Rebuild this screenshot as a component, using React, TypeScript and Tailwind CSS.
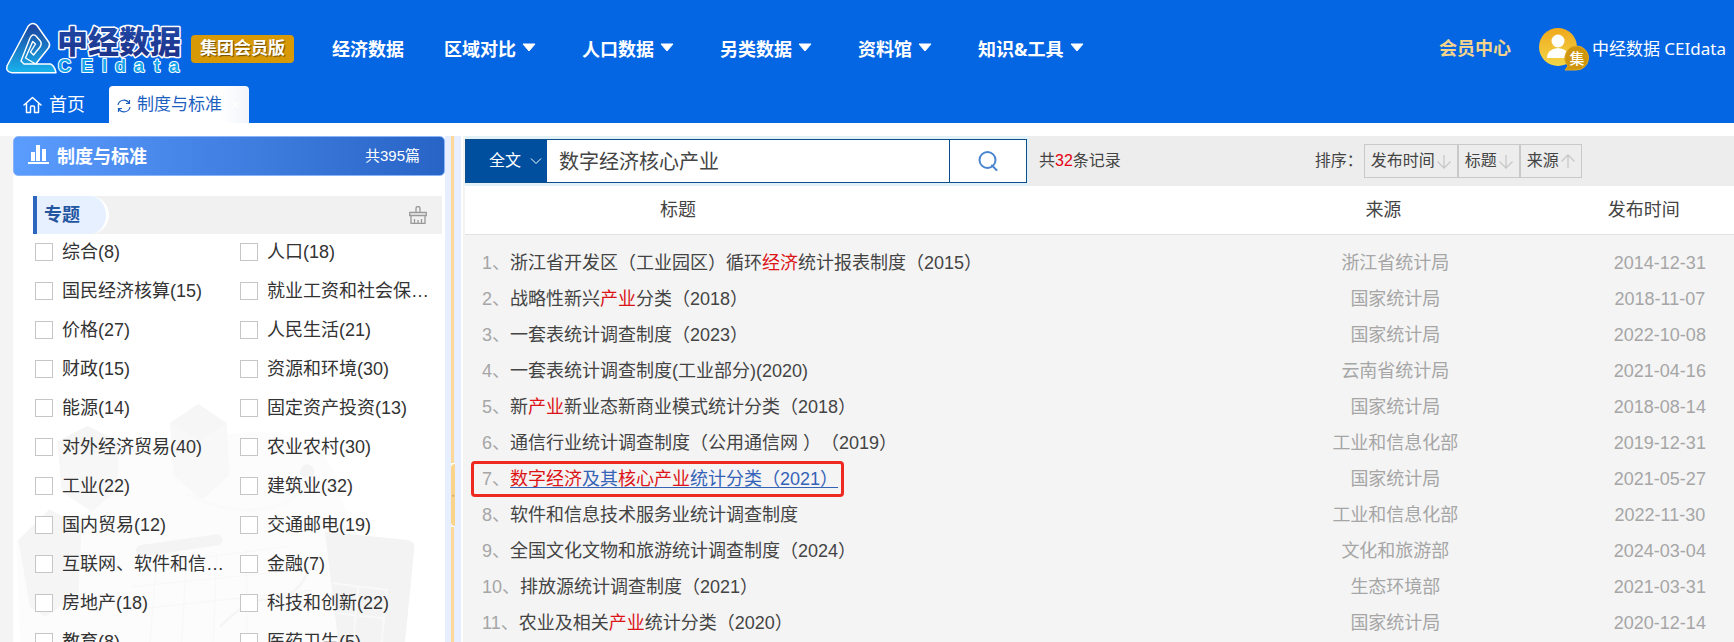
import React from "react";

type Run = string | { hit: string };
type Row = { title: Run[]; source: string; date: string; active?: boolean };

const NAV: { label: string; menu: boolean }[] = [
  { label: "经济数据", menu: false },
  { label: "区域对比", menu: true },
  { label: "人口数据", menu: true },
  { label: "另类数据", menu: true },
  { label: "资料馆", menu: true },
  { label: "知识&工具", menu: true },
];

const TOPICS: string[] = [
  "综合(8)", "人口(18)",
  "国民经济核算(15)", "就业工资和社会保障(12)",
  "价格(27)", "人民生活(21)",
  "财政(15)", "资源和环境(30)",
  "能源(14)", "固定资产投资(13)",
  "对外经济贸易(40)", "农业农村(30)",
  "工业(22)", "建筑业(32)",
  "国内贸易(12)", "交通邮电(19)",
  "互联网、软件和信息技术(9)", "金融(7)",
  "房地产(18)", "科技和创新(22)",
  "教育(8)", "医药卫生(5)",
];

const ROWS: Row[] = [
  { title: ["浙江省开发区（工业园区）循环", { hit: "经济" }, "统计报表制度（2015）"], source: "浙江省统计局", date: "2014-12-31" },
  { title: ["战略性新兴", { hit: "产业" }, "分类（2018）"], source: "国家统计局", date: "2018-11-07" },
  { title: ["一套表统计调查制度（2023）"], source: "国家统计局", date: "2022-10-08" },
  { title: ["一套表统计调查制度(工业部分)(2020)"], source: "云南省统计局", date: "2021-04-16" },
  { title: ["新", { hit: "产业" }, "新业态新商业模式统计分类（2018）"], source: "国家统计局", date: "2018-08-14" },
  { title: ["通信行业统计调查制度（公用通信网 ）（2019）"], source: "工业和信息化部", date: "2019-12-31" },
  { title: [{ hit: "数字经济" }, "及其", { hit: "核心产业" }, "统计分类（2021）"], source: "国家统计局", date: "2021-05-27", active: true },
  { title: ["软件和信息技术服务业统计调查制度"], source: "工业和信息化部", date: "2022-11-30" },
  { title: ["全国文化文物和旅游统计调查制度（2024）"], source: "文化和旅游部", date: "2024-03-04" },
  { title: ["排放源统计调查制度（2021）"], source: "生态环境部", date: "2021-03-31" },
  { title: ["农业及相关", { hit: "产业" }, "统计分类（2020）"], source: "国家统计局", date: "2020-12-14" },
];

function Logo() {
  return (
    <svg width="178" height="56" viewBox="0 0 178 56" role="img" aria-label="中经数据 CEIdata" className="shrink-0">
      <defs>
        <linearGradient id="mark" gradientUnits="userSpaceOnUse" x1="0" y1="2" x2="0" y2="52">
          <stop offset="0" stopColor="#1b3f9c" />
          <stop offset="1" stopColor="#18b4ee" />
        </linearGradient>
        <linearGradient id="word" x1="0" y1="0" x2="0" y2="1">
          <stop offset="0" stopColor="#1f4fae" />
          <stop offset="1" stopColor="#1e2f86" />
        </linearGradient>
      </defs>
      <path
        d="M24.300 5Q28.700 .2 33 4.500L45 21.500Q46.500 24.500 44.300 27.300L31.700 43H46.500Q50.500 44.500 52 51.700H8Q1.500 51 3 45Z"
        fill="url(#mark)" stroke="#fff" strokeWidth="1.500" strokeLinejoin="round"
      />
      <path
        d="M31.700 43H20L17 40L26 17Q28.500 12 32 15L36.700 20.500Q38 23 36 26L29.500 34L26.500 31L31.500 23L28.700 20.500L21.500 37Z"
        fill="url(#mark)" stroke="#fff" strokeWidth="1.400" strokeLinejoin="round"
      />
      <g strokeLinejoin="round" stroke="#fff" paintOrder="stroke">
        <text x="53" y="32" fontSize="31" fontWeight="900" strokeWidth="3" fill="url(#word)" className="font-['Noto_Sans_CJK_SC',sans-serif]">中经数据</text>
        <text x="54 77 98 111 130 150 165" y="51" fontSize="18" fontWeight="700" strokeWidth="2" fill="#16a6ea" className="font-['Liberation_Sans',sans-serif]">CEIdata</text>
      </g>
    </svg>
  );
}

function Avatar() {
  return (
    <svg width="52" height="46" viewBox="0 0 52 46" aria-hidden="true" className="shrink-0">
      <defs>
        <linearGradient id="gold" x1="0" y1="0" x2="0" y2="1">
          <stop offset="0" stopColor="#f0a81c" />
          <stop offset="1" stopColor="#f2d648" />
        </linearGradient>
      </defs>
      <circle cx="19" cy="21" r="19" fill="url(#gold)" />
      <circle cx="19" cy="15" r="6.500" fill="#fff" />
      <path d="M8 32q0-9 11-10q11 1 11 10Z" fill="#fff" />
      <path d="M38 20a12 12 0 1 1-1 24h-11l3-4A12 12 0 0 1 38 20Z" fill="#cf950c" stroke="#e0aa20" />
      <text x="38" y="37.500" textAnchor="middle" fontSize="15" fontWeight="500" fill="#fff" className="font-['Noto_Sans_CJK_SC',sans-serif]">集</text>
    </svg>
  );
}

function Header() {
  return (
    <header className="shrink-0 bg-[#0566e4] text-white">
      <div className="flex h-[86px] items-center pt-3 pr-2 pl-1">
        <a href="#home" className="flex"><Logo /></a>
        <span className="ml-[9px] flex h-7 w-[103px] shrink-0 items-center justify-center rounded-sm bg-[#d79a06] text-[17px] font-bold [text-shadow:1px_1px_1px_#6b4a00]">集团会员版</span>
        <nav className="ml-[38px] flex items-center gap-[46px] text-lg font-bold whitespace-nowrap">
          {NAV.map((n) => (
            <a key={n.label} href="#nav" className="flex items-center gap-[6px] font-['Noto_Sans','Noto_Sans_CJK_SC',sans-serif] first:-mr-[6px]">
              {n.label}
              {n.menu && (
                <svg width="14" height="9" viewBox="0 0 14 9" aria-hidden="true" className="mb-1">
                  <path d="M1 1h12L7 8Z" fill="#fff" stroke="#fff" strokeLinejoin="round" />
                </svg>
              )}
            </a>
          ))}
        </nav>
        <a href="#member" className="ml-auto text-lg font-bold whitespace-nowrap text-[#f3d48c]">会员中心</a>
        <a href="#account" className="ml-7 flex items-center gap-px font-['Noto_Sans','Noto_Sans_CJK_SC',sans-serif] text-[17px] whitespace-nowrap">
          <Avatar />
          中经数据 CEIdata
        </a>
      </div>
      <div className="flex h-[37px] items-stretch text-lg">
        <a href="#home" className="flex w-[109px] items-center gap-[7px] pl-[23px]">
          <svg width="19" height="18" viewBox="0 0 19 18" fill="none" stroke="#fff" strokeWidth="1.500" strokeLinejoin="round" strokeLinecap="round" aria-hidden="true">
            <path d="M1 9L9.500 1.500L18 9M3.500 7.500V16.500H7.500V11q0-1 1-1h2q1 0 1 1v5.500h4V7.500" />
          </svg>
          首页
        </a>
        <div className="flex w-[140px] items-center rounded-t-[4px] bg-linear-to-r from-white from-80% to-[#f1f4fa] pt-[2px] pl-2 text-[17px] text-[#1d5fbf]">
          <svg width="14" height="14" viewBox="0 0 14 14" fill="none" stroke="#1d5fbf" strokeWidth="1.200" aria-hidden="true">
            <path d="M1 6A6 6 0 0 1 12 4M13 8A6 6 0 0 1 2 10M12.500 1v3.500H9M1.500 13V9.500H5" />
          </svg>
          <a href="#standards" className="ml-[6px]">制度与标准</a>
          <button aria-label="关闭" className="ml-2 text-white">×</button>
        </div>
      </div>
    </header>
  );
}

function Backdrop() {
  return (
    <svg viewBox="39 0 1296 786" aria-hidden="true" className="absolute top-[244px] left-0 w-full">
      <path d="M360 210L700 160Q1000 130 1020 350L1215 786H60L50 480L260 400Z" fill="#fcfcfc" />
      <path d="M262 138L357 185L352 330L275 395L185 335L172 185Z" fill="#f7f7f7" />
      <path d="M262 138L357 185L268 230L172 185Z" fill="#f5f5f5" />
      <path d="M595 72L680 130L688 285L605 360L520 285L510 130Z" fill="#f8f8f8" />
      <path d="M595 72L680 130L600 180L510 130Z" fill="#f6f6f6" />
      <path d="M148 388L245 440L235 640L135 710L90 680L55 480Z" fill="#f5f5f5" />
      <path d="M425 512L650 480" stroke="#f4f4f4" strokeWidth="34" strokeLinecap="round" />
      <circle cx="922" cy="274" r="21" fill="#f4f4f4" />
      <path d="M922 290Q900 380 760 390Q640 390 560 340" stroke="#fafafa" strokeWidth="10" fill="none" />
      <path d="M975 455L1225 480Q1245 485 1243 505L1215 786H1015Z" fill="#f3f3f3" />
      <path d="M1000 610L1160 630L1145 786M1075 620L1060 786M1010 700L1150 715" stroke="#f9f9f9" strokeWidth="6" fill="none" />
      <path d="M400 560L860 500M395 620L900 570M390 690L940 630M470 540L450 786M560 530L545 786M650 520L640 786M740 510L740 786" stroke="#f8f8f8" strokeWidth="4" fill="none" />
      <path d="M660 740Q760 640 830 660Q900 640 925 570" stroke="#f5f5f5" strokeWidth="8" fill="none" />
    </svg>
  );
}

function Sidebar() {
  return (
    <aside className="relative w-[432px] shrink-0 overflow-hidden bg-white">
      <Backdrop />
      <div className="relative">
        <div className="flex h-10 items-center rounded-[5px] border border-[#8ab4f8] bg-linear-to-r from-[#5b9cff] to-[#2864c6] pr-6 pl-[14px] text-white">
          <svg width="21" height="20" viewBox="0 0 21 20" fill="#fff" aria-hidden="true" className="mb-1">
            <path d="M0 18h21v2H0ZM3 8h4v9H3ZM8 1h4v16H8ZM14 5h4v12h-4Z" />
          </svg>
          <h2 className="ml-2 pt-[2px] text-lg font-bold">制度与标准</h2>
          <span className="ml-auto text-[15px]">共395篇</span>
        </div>
        <div className="mt-5 mr-[3px] ml-5 flex h-[38px] items-center border-l-4 border-[#2c66bd] bg-[#f1f1f1]">
          <h3 className="flex h-full w-[72px] items-center rounded-r-full border-r-3 border-white bg-[#e6f0ff] pl-[7px] text-lg font-bold text-[#24569f]">专题</h3>
          <button aria-label="清空" className="mr-[15px] ml-auto">
            <svg width="18" height="18" viewBox="0 0 18 18" fill="none" stroke="#999" strokeWidth="1.300" aria-hidden="true" className="block">
              <path d="M7 6.500V2.500a2 2 0 0 1 4 0V6.500M.700 6.500H17.300V9.500H.700ZM2 9.500V17.300H16V9.500M5.500 13v4M9 14v3M12.500 13v4" />
            </svg>
          </button>
        </div>
        <div className="-mt-[2px] ml-[22px] grid grid-cols-2">
          {TOPICS.map((t) => (
            <label key={t} className="flex h-[39px] items-center gap-[9px] text-lg text-[#333]">
              <input type="checkbox" className="size-[18px] shrink-0 appearance-none border border-[#c6c6c6] bg-white" />
              <span className="w-[162px] truncate">{t}</span>
            </label>
          ))}
        </div>
      </div>
    </aside>
  );
}

function Splitter() {
  return (
    <div className="flex w-5 shrink-0">
      <div className="flex w-4 flex-col bg-[#e6eeff] pl-[6px]">
        <div className="h-[327px] w-[3px] bg-[#fdd896]" />
        <button aria-label="收起" className="flex h-16 w-1 items-center bg-white">
          <span className="block h-[62px] w-1 rounded-l-full bg-[#fbd48c] text-[6px] leading-[62px] text-[#8a7a55]">‹</span>
        </button>
        <div className="w-[3px] grow bg-[#fdd896]" />
      </div>
      <div className="w-[2px] bg-white" />
    </div>
  );
}

function SortArrow({ up }: { up?: boolean }) {
  return (
    <svg width="14" height="15" viewBox="0 0 14 15" fill="none" stroke="#c8c8c8" strokeWidth="1.300" aria-hidden="true">
      {up ? <path d="M7 14V1M.500 7.500L7 1L13.500 7.500" /> : <path d="M7 1V14M.500 7.500L7 14L13.500 7.500" />}
    </svg>
  );
}

function SearchBar() {
  const sorts = [
    { label: "发布时间", up: false },
    { label: "标题", up: false },
    { label: "来源", up: true },
  ];
  return (
    <div className="flex h-[50px] items-center bg-[#ededed] text-base text-[#444]">
      <div className="flex h-full w-[564px] shrink-0 items-center bg-[#e2f0f7]">
        <form className="flex h-11 w-[562px] border border-[#0b4f8c] bg-white">
          <div className="relative w-[81px] bg-[#004f9f]">
            <select aria-label="检索范围" className="h-full w-full appearance-none bg-[#004f9f] pl-[23px] text-white">
              <option>全文</option>
            </select>
            <svg width="12" height="8" viewBox="0 0 12 8" fill="none" stroke="#fff" aria-hidden="true" className="pointer-events-none absolute top-[17px] right-[5px]">
              <path d="M1 1.500L6 6.500L11 1.500" />
            </svg>
          </div>
          <input aria-label="关键词" defaultValue="数字经济核心产业" className="min-w-0 grow pt-[2px] pl-3 text-xl text-[#444] outline-none" />
          <button type="button" aria-label="搜索" className="flex w-[77px] items-center justify-center border-l border-[#0b4f8c]">
            <svg width="20" height="20" viewBox="0 0 20 20" fill="none" stroke="#4a86cf" strokeWidth="2" strokeLinecap="round" aria-hidden="true">
              <circle cx="9.500" cy="9" r="8" />
              <path d="M14 14.500L18.500 19" />
            </svg>
          </button>
        </form>
      </div>
      <p className="ml-[10px] whitespace-nowrap">共<span className="text-[#e60012]">32</span>条记录</p>
      <div className="mr-[12%] ml-auto flex items-center whitespace-nowrap">
        <span className="mr-px">排序：</span>
        {sorts.map((s) => (
          <button key={s.label} className="flex h-[34px] items-center gap-[2px] border border-[#c9c9c9] px-[6px]">
            {s.label}
            <SortArrow up={s.up} />
          </button>
        ))}
      </div>
    </div>
  );
}

function Title({ row, index }: { row: Row; index: number }) {
  return (
    <span className="relative inline-block whitespace-pre text-[#a6a6a6] [text-spacing-trim:space-all]">
      {index + 1}、
      <a href="#item" className={row.active ? "text-[#3463b8] underline underline-offset-2" : "text-[#444]"}>
        {row.title.map((r, i) =>
          typeof r === "string" ? r : <em key={i} className="text-[#dc1418] not-italic">{r.hit}</em>
        )}
      </a>
      {row.active && <span className="pointer-events-none absolute -top-1 -right-[6px] -bottom-1 -left-[11px] rounded-sm border-3 border-[#ee2a20]" />}
    </span>
  );
}

function Results() {
  return (
    <table className="w-full table-fixed border-collapse text-lg">
      <thead>
        <tr className="h-12 border-b border-[#e2e2e2] bg-white text-[#444]">
          <th className="w-[58%] pl-[195px] text-left font-normal">标题</th>
          <th className="w-[30%] pr-4 font-normal">来源</th>
          <th className="w-[12%] pr-7 font-normal">发布时间</th>
        </tr>
      </thead>
      <tbody className="before:block before:h-[10px]">
        {ROWS.map((r, i) => (
          <tr key={r.date} className="h-9 leading-7 text-[#a6a6a6]">
            <td className="py-0 pl-[17px] whitespace-nowrap"><Title row={r} index={i} /></td>
            <td className="py-0 pl-2 text-center">{r.source}</td>
            <td className="py-0 pl-1 text-center">{r.date}</td>
          </tr>
        ))}
      </tbody>
    </table>
  );
}

export default function App() {
  return (
    <div className="flex h-screen flex-col overflow-hidden bg-white font-['Liberation_Sans','Noto_Sans_CJK_SC',sans-serif]">
      <Header />
      <main className="mt-[13px] flex min-h-0 grow overflow-hidden bg-[#f4f4f4] pl-[13px]">
        <Sidebar />
        <Splitter />
        <section className="min-w-0 grow">
          <SearchBar />
          <Results />
        </section>
      </main>
    </div>
  );
}
